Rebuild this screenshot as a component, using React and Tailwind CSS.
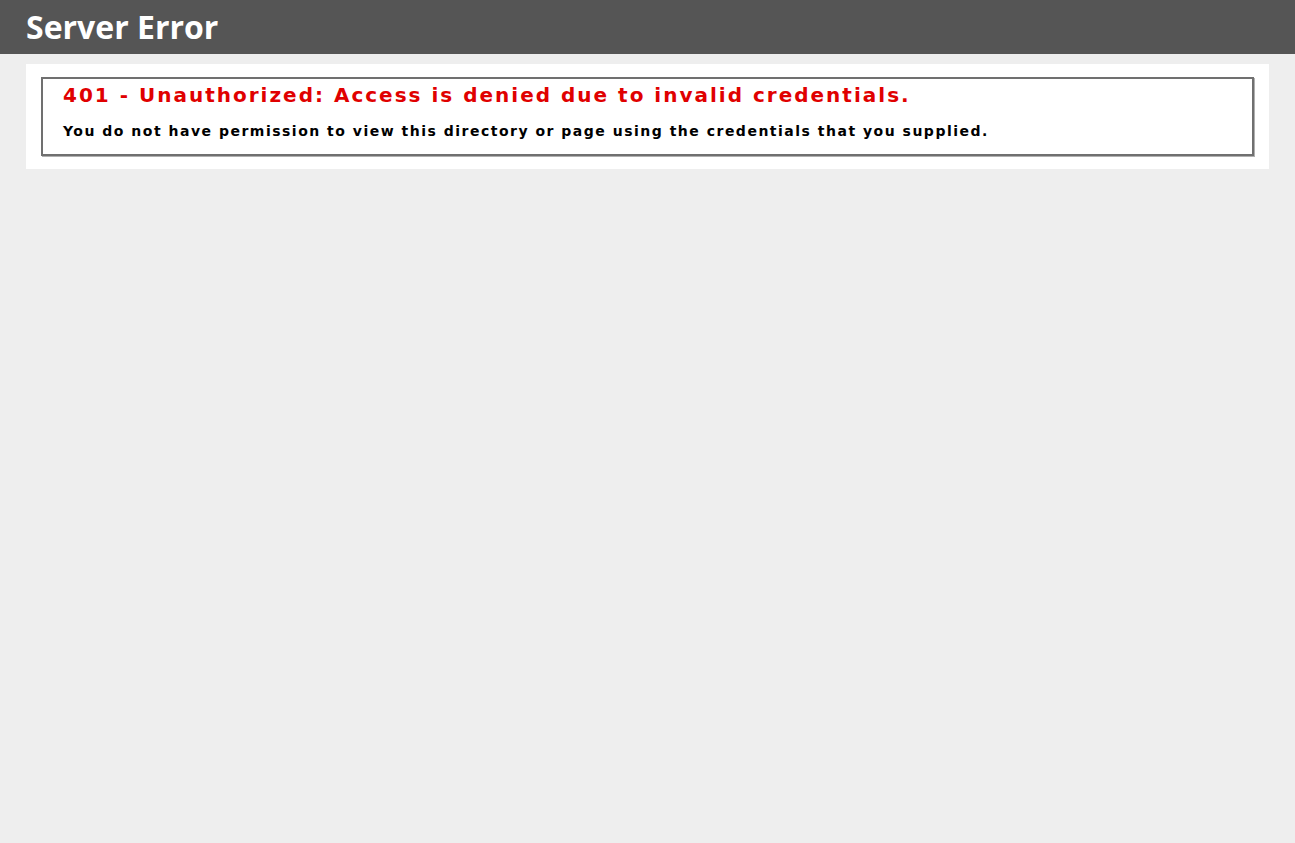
import React from 'react';

export default function App() {
  return (
    <div className="min-h-screen bg-[#eeeeee] font-['DejaVu_Sans',Verdana,sans-serif]">
      {/* header bar */}
      <div className="h-[54px] bg-[#555555] pl-[26px] flex items-center">
        <h1 className="text-[32px] font-bold leading-none text-white font-['Open_Sans',sans-serif] -mt-[1px]">
          Server Error
        </h1>
      </div>

      <div className="pt-[10px] pl-[26px]">
        <div className="w-[1243px] h-[105px] bg-white pl-[15px] pt-[13px]">
          <fieldset className="w-[1213px] h-[79px] border-2 border-[#707070] shadow-[1px_1px_0_#b0b0b0] pl-[20px] pt-[2px]">
            <h2 className="text-[20px] font-bold leading-[28px] tracking-[2px] text-[#e00000]">
              401 - Unauthorized: Access is denied due to invalid credentials.
            </h2>
            <h3 className="mt-[14px] text-[14px] font-bold leading-[17px] tracking-[1.5px] text-black">
              You do not have permission to view this directory or page using the credentials that you supplied.
            </h3>
          </fieldset>
        </div>
      </div>
    </div>
  );
}
